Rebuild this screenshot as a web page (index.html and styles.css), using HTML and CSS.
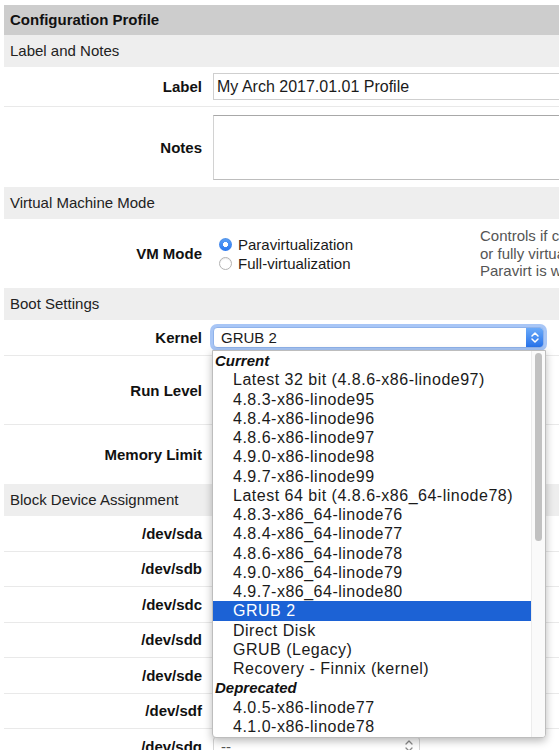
FILE: index.html
```html
<!DOCTYPE html>
<html>
<head>
<meta charset="utf-8">
<title>Configuration Profile</title>
<link rel="stylesheet" href="styles.css">
</head>
<body>
<div class="page">
  <div class="title">Configuration Profile</div>

  <div class="section">Label and Notes</div>
  <div class="row row-label">
    <div class="label">Label</div>
    <div class="field"><input class="text-input" type="text" value="My Arch 2017.01.01 Profile"></div>
  </div>
  <div class="row row-notes last">
    <div class="label">Notes</div>
    <div class="field"><textarea class="notes"></textarea></div>
  </div>

  <div class="section">Virtual Machine Mode</div>
  <div class="row row-vm last">
    <div class="label">VM Mode</div>
    <div class="radios">
      <div class="opt"><span class="radio on"></span>Paravirtualization</div>
      <div class="opt"><span class="radio"></span>Full-virtualization</div>
    </div>
    <div class="desc">
      <div>Controls if core</div>
      <div>or fully virtualized.</div>
      <div>Paravirt is what</div>
    </div>
  </div>

  <div class="section">Boot Settings</div>
  <div class="row row-kernel">
    <div class="label">Kernel</div>
    <div class="field">
      <div class="select focus">
        <span class="select-text">GRUB 2</span>
        <span class="select-btn">
          <svg width="16" height="19" viewBox="0 0 16 19"><path d="M5 8 L8 5 L11 8 M5 11 L8 14 L11 11" fill="none" stroke="#fff" stroke-width="1.5" stroke-linecap="round" stroke-linejoin="round"/></svg>
        </span>
      </div>
    </div>
  </div>
  <div class="row row-runlevel">
    <div class="label">Run Level</div>
    <div class="field"></div>
  </div>
  <div class="row row-memory last">
    <div class="label">Memory Limit</div>
    <div class="field"></div>
  </div>

  <div class="section">Block Device Assignment</div>
  <div class="row dev"><div class="label">/dev/sda</div><div class="field"><div class="dev-select"></div></div></div>
  <div class="row dev"><div class="label">/dev/sdb</div><div class="field"><div class="dev-select"></div></div></div>
  <div class="row dev"><div class="label">/dev/sdc</div><div class="field"><div class="dev-select"></div></div></div>
  <div class="row dev"><div class="label">/dev/sdd</div><div class="field"><div class="dev-select"></div></div></div>
  <div class="row dev"><div class="label">/dev/sde</div><div class="field"><div class="dev-select"></div></div></div>
  <div class="row dev"><div class="label">/dev/sdf</div><div class="field"><div class="dev-select"></div></div></div>
  <div class="row dev"><div class="label">/dev/sdg</div><div class="field"><div class="dev-select"><span class="select-text">--</span><svg width="12" height="16" viewBox="0 0 12 16"><path d="M3 6 L6 3 L9 6 M3 10 L6 13 L9 10" fill="none" stroke="#8a8a8a" stroke-width="1.3" stroke-linecap="round" stroke-linejoin="round"/></svg></div></div></div>

  <div class="menu">
    <div class="menu-list">
      <div class="group">Current</div>
      <div class="item">Latest 32 bit (4.8.6-x86-linode97)</div>
      <div class="item">4.8.3-x86-linode95</div>
      <div class="item">4.8.4-x86-linode96</div>
      <div class="item">4.8.6-x86-linode97</div>
      <div class="item">4.9.0-x86-linode98</div>
      <div class="item">4.9.7-x86-linode99</div>
      <div class="item">Latest 64 bit (4.8.6-x86_64-linode78)</div>
      <div class="item">4.8.3-x86_64-linode76</div>
      <div class="item">4.8.4-x86_64-linode77</div>
      <div class="item">4.8.6-x86_64-linode78</div>
      <div class="item">4.9.0-x86_64-linode79</div>
      <div class="item">4.9.7-x86_64-linode80</div>
      <div class="item selected">GRUB 2</div>
      <div class="item">Direct Disk</div>
      <div class="item">GRUB (Legacy)</div>
      <div class="item">Recovery - Finnix (kernel)</div>
      <div class="group">Deprecated</div>
      <div class="item">4.0.5-x86-linode77</div>
      <div class="item">4.1.0-x86-linode78</div>
    </div>
    <div class="menu-scroll"><div class="thumb"></div></div>
  </div>
</div>
</body>
</html>
```

FILE: styles.css
```css
html {
  overflow: hidden;
}

body {
  margin: 0;
  background: #fff;
  color: #1a1a1a;
  font-family: "Liberation Sans", Arial, Helvetica, sans-serif;
  font-size: 15px;
}

.page {
  position: relative;
  margin: 5px 0 0 4px;
  width: 780px;
}

.title {
  height: 30px;
  line-height: 30px;
  padding-left: 6px;
  background: #cdcdcd;
  font-weight: bold;
  color: #111;
}

.section {
  height: 32px;
  line-height: 32px;
  padding-left: 6px;
  background: #eeeeee;
  color: #222;
}

.row {
  display: grid;
  grid-template-columns: 198px 1fr;
  column-gap: 11px;
  align-items: center;
  border-bottom: 1px solid #e9e9e9;
}

.row.last {
  border-bottom: none;
}

.label {
  text-align: right;
  font-weight: bold;
  color: #111;
}

.row-label {
  padding: 6px 0;
}

.text-input {
  display: block;
  box-sizing: border-box;
  width: 520px;
  height: 27px;
  margin: 0;
  padding: 0 3px;
  border: 1px solid #cfcfcf;
  border-radius: 0;
  font-family: "Liberation Sans", Arial, sans-serif;
  font-size: 16px;
  color: #1a1a1a;
  background: #fff;
  outline: none;
}

.row-notes {
  padding: 8px 0 7px;
}

.notes {
  display: block;
  box-sizing: border-box;
  width: 520px;
  height: 65px;
  margin: 0;
  padding: 3px;
  border: 1px solid #d2d2d2;
  border-top-color: #a8a8a8;
  border-bottom-color: #bdbdbd;
  border-radius: 0;
  resize: none;
  outline: none;
  font-family: "Liberation Sans", Arial, sans-serif;
  font-size: 15px;
}

.row-vm {
  grid-template-columns: 198px 256px 1fr;
  height: 69px;
}

.radios {
  display: flex;
  flex-direction: column;
  padding-left: 6px;
  color: #1a1a1a;
}

.opt {
  display: flex;
  align-items: center;
  height: 19px;
}

.radio {
  box-sizing: border-box;
  width: 13px;
  height: 13px;
  margin-right: 6px;
  border-radius: 50%;
  border: 1px solid #b3b3b3;
  background: #fff;
  box-shadow: inset 0 1px 1px rgba(0, 0, 0, 0.08);
}

.radio.on {
  border: none;
  background: radial-gradient(circle, #fff 0, #fff 2.3px, transparent 2.8px), linear-gradient(#5fa2f7, #2a78ee);
}

.desc {
  width: 79px;
  overflow: hidden;
  color: #555;
  line-height: 17.5px;
  white-space: nowrap;
}

.row-kernel {
  height: 35px;
}

.select {
  display: flex;
  align-items: stretch;
  box-sizing: border-box;
  width: 331px;
  height: 21px;
  border: 1px solid #8fb2ea;
  border-radius: 4px;
  background: #fff;
  font-size: 15px;
  color: #1a1a1a;
}

.select.focus {
  box-shadow: 0 0 0 3px rgba(110, 160, 240, 0.6);
}

.select-text {
  flex: 1;
  padding-left: 7px;
  line-height: 19px;
}

.select-btn {
  display: flex;
  align-items: center;
  justify-content: center;
  width: 17px;
  border-radius: 0 3px 3px 0;
  background: linear-gradient(#6aaaf9, #2873ea);
}

.row-runlevel {
  height: 68px;
}

.row-memory {
  height: 59px;
}

.row.dev {
  height: 34.5px;
}

.dev-select {
  display: flex;
  align-items: center;
  box-sizing: border-box;
  width: 207px;
  height: 21px;
  padding-right: 4px;
  border: 1px solid #d6d6d6;
  border-radius: 4px;
  background: #fff;
  color: #555;
}

.menu {
  position: absolute;
  left: 208px;
  top: 345px;
  z-index: 5;
  display: flex;
  box-sizing: border-box;
  width: 334px;
  height: 388px;
  border: 1px solid #bdbdbd;
  border-radius: 0 0 4px 4px;
  background: #fff;
  box-shadow: 0 3px 8px rgba(0, 0, 0, 0.28);
  overflow: hidden;
}

.menu-list {
  flex: 1;
  overflow: hidden;
  font-size: 16px;
  letter-spacing: 0.5px;
  color: #1a1a1a;
}

.group {
  height: 19.26px;
  line-height: 19.26px;
  padding-left: 2px;
  font-size: 15px;
  letter-spacing: 0;
  font-weight: bold;
  font-style: italic;
  color: #111;
}

.item {
  height: 19.26px;
  line-height: 19.26px;
  padding-left: 20px;
  white-space: nowrap;
}

.item.selected {
  background: #1c62d5;
  color: #fff;
}

.menu-scroll {
  width: 14px;
  border-left: 1px solid #ececec;
  background: #fafafa;
  padding: 2px 3px 0 3px;
  box-sizing: border-box;
}

.thumb {
  height: 188px;
  border-radius: 4px;
  background: #c1c1c1;
}
```
